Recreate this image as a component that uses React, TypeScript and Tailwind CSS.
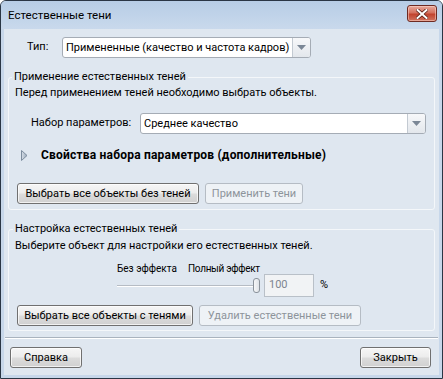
import React from "react";

function Btn({
  children,
  disabled,
  className = "",
}: {
  children: React.ReactNode;
  disabled?: boolean;
  className?: string;
}) {
  return (
    <div
      className={
        "h-[21px] flex items-center justify-center rounded-[3px] border text-[11px] leading-none whitespace-nowrap " +
        (disabled
          ? "border-[#b5bcc4] bg-[#eef2f6] text-[#8d949b] "
          : "border-[#707070] bg-[linear-gradient(#f6f6f6_0%,#ececec_48%,#dcdcdc_52%,#d0d0d0_100%)] text-black shadow-[inset_0_0_0_1px_rgba(255,255,255,0.7)] ") +
        className
      }
    >
      {children}
    </div>
  );
}

function Combo({ text, className = "" }: { text: string; className?: string }) {
  return (
    <div
      className={
        "h-[21px] flex items-stretch bg-white border border-[#a5acb5] rounded-[3px] " +
        className
      }
    >
      <div className="flex-1 flex items-center pl-[3px] text-[11px] text-black leading-none whitespace-nowrap">
        {text}
      </div>
      <div className="w-[18px] flex items-center justify-center border-l border-[#c3cad2] bg-[linear-gradient(#f7f8fa,#e3e7ec)] rounded-r-[2px]">
        <svg width="9" height="5" viewBox="0 0 9 5">
          <polygon points="0,0 9,0 4.5,5" fill="#7b8796" />
        </svg>
      </div>
    </div>
  );
}

export default function App() {
  return (
    <div className="w-[443px] h-[379px] font-['Roboto',sans-serif] text-[11px] text-black whitespace-nowrap">
      <div className="w-full h-full flex flex-col border border-[#2a3645] rounded-t-[6px] bg-[#c7d7ea] overflow-hidden">
        {/* Title bar */}
        <div className="h-[28px] flex items-start bg-[linear-gradient(#b7cde6,#c9d9ec)] shrink-0">
          <div className="ml-[7px] mt-[6px] text-[11.5px] leading-[16px] text-black">
            Естественные тени
          </div>
          <div className="ml-auto mr-[5px] mt-[4px] w-[30px] h-[17px] rounded-[3px] border border-[#6e2a22] bg-[linear-gradient(#e8aa9c_0%,#d4705e_45%,#c2432e_55%,#d0735f_100%)] flex items-center justify-center shadow-[inset_0_0_0_1px_rgba(255,220,210,0.5)]">
            <svg width="12" height="10" viewBox="0 0 12 10">
              <path
                d="M1.5 1 L10.5 9 M10.5 1 L1.5 9"
                stroke="#5a2019"
                strokeWidth="3.6"
                strokeLinecap="square"
              />
              <path
                d="M1.5 1 L10.5 9 M10.5 1 L1.5 9"
                stroke="#ffffff"
                strokeWidth="2"
                strokeLinecap="square"
              />
            </svg>
          </div>
        </div>

        {/* Body */}
        <div className="mx-[3px] mb-[3px] flex-1 flex flex-col bg-[#dfe7f0] px-[4px]">
          {/* Type row */}
          <div className="mt-[8px] flex items-center h-[21px]">
            <div className="ml-[19px] w-[35px]">Тип:</div>
            <Combo text="Примененные (качество и частота кадров)" className="w-[249px]" />
          </div>

          {/* Group 1 */}
          <fieldset className="mt-[11px] border border-[#f4f7fa] rounded-[3px] pb-[5px]">
            <legend className="ml-[3px] px-[2px] leading-[16px]">
              Применение естественных теней
            </legend>
            <div className="pl-[6px] leading-[16px]">
              Перед применением теней необходимо выбрать объекты.
            </div>
            <div className="mt-[12px] flex items-center h-[21px]">
              <div className="ml-[22px] w-[109px]">Набор параметров:</div>
              <Combo text="Среднее качество" className="w-[286px]" />
            </div>
            <div className="mt-[13px] h-[16px] flex items-center">
              <svg width="7" height="11" viewBox="0 0 7 11" className="ml-[12px]">
                <defs>
                  <linearGradient id="tri" x1="0" y1="0" x2="1" y2="0">
                    <stop offset="0" stopColor="#d6dee7" />
                    <stop offset="1" stopColor="#9aa9ba" />
                  </linearGradient>
                </defs>
                <polygon points="0.5,0.5 6,5.5 0.5,10.5" fill="url(#tri)" stroke="#7c8c9e" strokeWidth="1" />
              </svg>
              <div className="ml-[13px] text-[12px] font-bold tracking-[0.2px] leading-[16px]">
                Свойства набора параметров (дополнительные)
              </div>
            </div>
            <div className="mt-[20px] flex items-center">
              <Btn className="ml-[8px] w-[182px]">Выбрать все объекты без теней</Btn>
              <Btn disabled className="ml-[6px] w-[98px]">
                Применить тени
              </Btn>
            </div>
          </fieldset>

          {/* Group 2 */}
          <fieldset className="mt-[11px] border border-[#f4f7fa] rounded-[3px] pb-[4px]">
            <legend className="ml-[4px] px-[2px] leading-[16px]">
              Настройка естественных теней
            </legend>
            <div className="mt-[1px] pl-[6px] leading-[16px]">
              Выберите объект для настройки его естественных теней.
            </div>
            <div className="mt-[9px] h-[11px] flex items-center text-[10px] leading-none">
              <div className="ml-[108px] w-[71px]">Без эффекта</div>
              <div className="tracking-[-0.3px]">Полный эффект</div>
            </div>
            <div className="h-[23px] flex items-center">
              <div className="ml-[108px] w-[143px] h-[15px] flex items-center">
                <div className="flex-1 h-[2px] border-t border-[#b6bcc4] bg-white" />
                <div className="-ml-[2px] w-[7px] h-[15px] rounded-[3px] border border-[#8a929b] bg-[linear-gradient(90deg,#f6f7f8,#dfe3e8)]" />
              </div>
              <div className="ml-[4px] w-[50px] h-[23px] border border-[#b9c0c8] bg-[#f1f3f5] flex items-center pl-[4px] text-[#7d8590]">
                100
              </div>
              <div className="ml-[6px]">%</div>
            </div>
            <div className="mt-[8px] flex items-center">
              <Btn className="ml-[8px] w-[176px]">Выбрать все объекты с тенями</Btn>
              <Btn disabled className="ml-[6px] w-[162px]">
                Удалить естественные тени
              </Btn>
            </div>
          </fieldset>

          {/* Separator */}
          <div className="mt-[6px] -mx-[3px] border-t border-[#a9b3be] border-b border-b-white" />

          {/* Bottom buttons */}
          <div className="mt-[8px] flex items-center">
            <Btn className="ml-[2px] w-[72px]">Справка</Btn>
            <Btn className="ml-auto mr-[4px] w-[71px]">Закрыть</Btn>
          </div>
        </div>
      </div>
    </div>
  );
}
